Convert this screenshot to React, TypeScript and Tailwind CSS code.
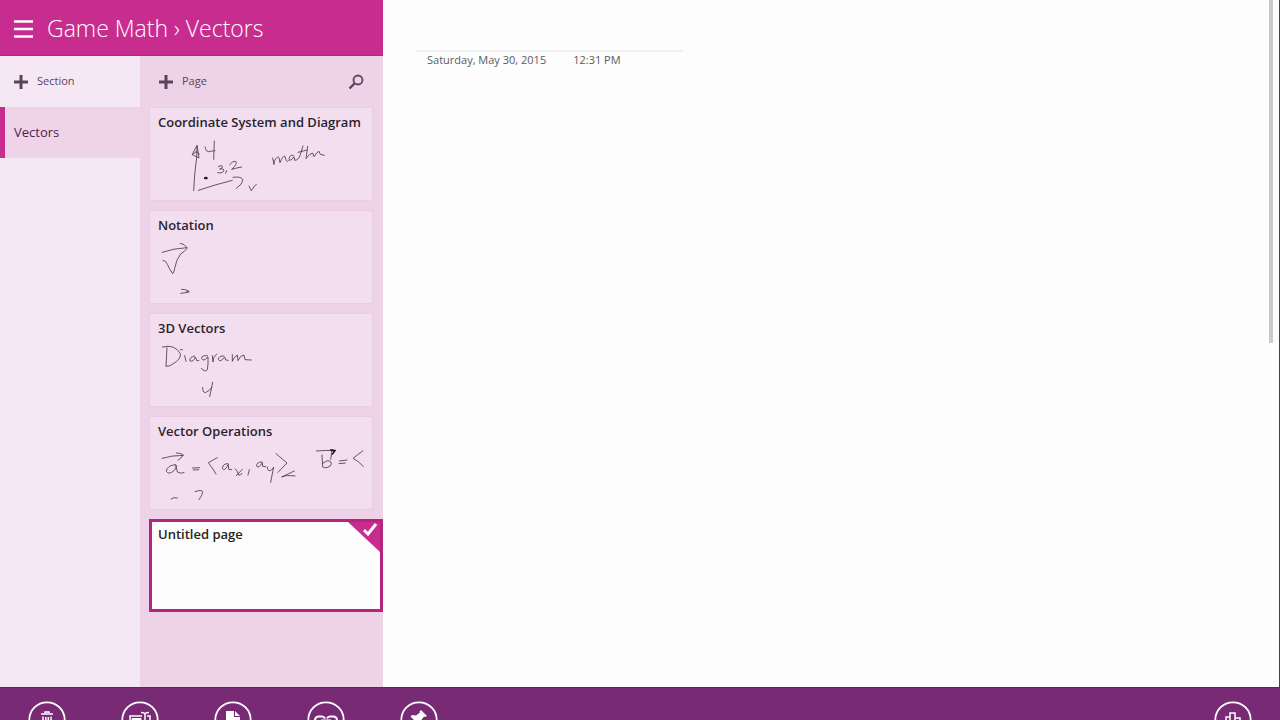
import type { ReactNode } from 'react';

type Page = {
  title: string;
  viewBox?: string;
  strokes?: string[];
  bold?: string;
};

// Ink thumbnails are recorded at three times the card size.
const pages: Page[] = [
  {
    title: 'Coordinate System and Diagram',
    viewBox: '15 114 666 186',
    strokes: [
      'M146 272 L149 225 L155 172 L156 138',
      'M142 163 L156 136 L162 174 L142 164 L153 155 L163 162',
      'M180 141 Q182 155 190 155 Q200 153 210 152 M208 123 L206 178',
      'M220 200 Q233 193 232 201 Q229 207 224 207 Q240 205 236 214 Q229 222 218 218 M245 212 L242 220',
      'M254 194 Q264 181 272 184 Q279 191 260 208 Q273 204 290 201',
      'M160 271 Q210 254 262 241 M264 232 Q289 228 294 240 Q292 253 274 265',
      'M312 258 L319 272 Q326 260 334 253',
      'M383 174 L387 194 L388 183 Q398 166 402 173 L405 188 Q413 168 419 168 L424 182 Q427 188 431 181',
      'M445 166 Q435 163 432 176 Q435 188 447 170 L449 181 Q462 180 466 164 L474 138 M459 157 L486 150 M488 139 L483 176 Q493 160 503 159 L507 170 Q516 155 522 154 L526 163 L538 166',
    ],
    bold: 'M177 234 L184 231 L188 235 L180 237 Z',
  },
  {
    title: 'Notation',
    viewBox: '15 108 666 186',
    strokes: [
      'M51 142 Q86 130 125 128 M106 115 Q119 116 127 129 Q120 139 107 147',
      'M54 166 Q63 166 67 178 Q75 195 83 206 Q87 204 89 190 Q94 163 106 148',
      'M110 253 Q124 253 132 259 Q122 265 107 265 M124 261 L132 261',
    ],
  },
  {
    title: '3D Vectors',
    viewBox: '15 108 666 186',
    strokes: [
      'M66 119 L63 175 M52 117 Q89 107 106 137 Q109 154 83 168 Q68 178 64 174',
      'M119 143 L123 160 M106 125 L112 125',
      'M149 144 Q132 148 135 159 Q145 163 151 147 L156 159 L162 157',
      'M188 144 Q170 140 170 151 Q174 163 189 147 Q190 169 187 185 Q180 194 169 181',
      'M202 143 L204 162 Q203 147 215 138',
      'M237 144 Q221 142 220 155 Q226 164 239 147 L242 156 L250 157',
      'M262 140 L262 160 Q267 146 277 141 L279 158 Q286 141 297 141 L300 155 L319 156',
      'M173 238 Q172 253 181 254 Q192 250 201 238 M203 223 L194 266',
    ],
  },
  {
    title: 'Vector Operations',
    viewBox: '15 111 666 186',
    strokes: [
      'M51 145 Q80 136 114 136 M94 129 Q107 128 115 135 Q109 145 99 151',
      'M91 164 Q66 166 64 184 Q72 196 88 181 Q97 168 92 164 L97 186 Q105 192 117 188',
      'M142 174 L164 173 M145 180 L161 179',
      'M217 143 L190 158 Q202 173 213 192',
      'M249 161 Q234 160 232 175 Q238 187 250 163 L251 178 L260 179',
      'M270 176 Q276 178 281 195 Q285 199 291 190 M292 178 L274 197 M313 179 L309 195',
      'M351 156 Q334 155 335 169 Q342 176 352 158 L353 169 L362 170',
      'M367 171 Q367 183 376 182 Q385 178 386 171 Q382 191 377 217',
      'M393 131 L426 159 L399 187 M448 183 L410 201 Q424 194 450 198',
      'M514 123 Q543 120 569 122 M557 148 L561 119',
      'M531 135 L533 171 Q541 177 556 168 Q565 153 547 152 L533 160',
      'M583 153 L606 150 M582 161 L601 159 M654 122 L624 145 Q640 153 655 169',
      'M78 267 Q86 260 97 264 M150 245 Q173 237 173 247 Q171 257 162 269',
    ],
    bold: 'M556 119 L572 121 L562 134 L566 124 Z',
  },
  { title: 'Untitled page' },
];

const actions: { label: string; icon: ReactNode }[] = [
  {
    label: 'Delete page',
    icon: (
      <g fill="none" stroke="white" strokeWidth="1.500">
        <path d="M13 13h12M17 12v-1h4v1M15 15.500v14h8v-14M17.800 16v11M20.300 16v11" />
      </g>
    ),
  },
  {
    label: 'Rename page',
    icon: (
      <g fill="none" stroke="white">
        <path d="M21 15H9v8h12M26 15h3v8h-3" strokeWidth="1.500" />
        <path d="M11 17.500h9v4h-9z" fill="white" />
        <path d="M20 11.500q4 0 4 2v12M28 11.500q-4 0-4 2" strokeWidth="1.500" />
      </g>
    ),
  },
  {
    label: 'New page',
    icon: <path d="M12 10h8v6h6v12H12zM21 10l5 5h-5z" fill="white" />,
  },
  {
    label: 'Copy link',
    icon: (
      <g fill="none" stroke="white" strokeWidth="2">
        <path d="M18 17.500q-1-2-3-2h-3q-4 0-4 4t4 4h3q2 0 3-2M20 17.500q1-2 3-2h3q4 0 4 4t-4 4h-3q-2 0-3-2M14 19.500h10" />
      </g>
    ),
  },
  {
    label: 'Pin to start',
    icon: (
      <path
        d="M21 9l6 6-2 1-1-.5-3 4 .5 4-2 1-4-4-5 4 4-5-4-4 1.500-1.500 4 .5 4-3-.5-1z"
        fill="white"
      />
    ),
  },
];

function PlusIcon() {
  return (
    <svg className="h-[14px] w-[14px]" viewBox="0 0 14 14" aria-hidden>
      <path d="M7 0v14M0 7h14" stroke="#5a4459" strokeWidth="3" />
    </svg>
  );
}

function RoundButton({ label, children }: { label: string; children: ReactNode }) {
  return (
    <button type="button" aria-label={label} className="h-[38px] w-[38px] shrink-0">
      <svg className="h-full w-full" viewBox="0 0 38 38" aria-hidden>
        <circle cx="19" cy="19" r="17.700" fill="none" stroke="white" strokeWidth="1.800" />
        {children}
      </svg>
    </button>
  );
}

function PageCard({ page }: { page: Page }) {
  return (
    <button
      type="button"
      className="mr-[10px] block border border-[#e8cde3] bg-[#f2deee] text-left"
    >
      <span className="block h-[30px] pl-2 text-[13px] leading-7 font-semibold whitespace-nowrap text-[#2c1f2d]">
        {page.title}
      </span>
      <svg className="h-[62px] w-full" viewBox={page.viewBox} preserveAspectRatio="xMinYMin meet" aria-hidden>
        <path
          d={page.strokes?.join(' ')}
          fill="none"
          stroke="#4c354c"
          strokeWidth="2.500"
          strokeLinecap="round"
          strokeLinejoin="round"
        />
        {page.bold && <path d={page.bold} fill="#1c101c" stroke="#1c101c" strokeWidth="3" />}
      </svg>
    </button>
  );
}

function SelectedCard({ page }: { page: Page }) {
  return (
    <button
      type="button"
      aria-pressed="true"
      className="flex h-[93px] items-start justify-between border-3 border-[#b5247f] bg-[#fdfdfd] text-left"
    >
      <span className="pl-[6px] text-[13px] leading-6 font-semibold text-[#242424]">{page.title}</span>
      <svg className="h-[30px] w-[32px]" viewBox="0 0 32 30" aria-hidden>
        <path d="M0 0h32v30z" fill="#c92c8f" />
        <path d="M16 8l4 4 8-10" fill="none" stroke="white" strokeWidth="3" />
      </svg>
    </button>
  );
}

export default function App() {
  return (
    <div className="flex h-screen flex-col overflow-hidden bg-[#fdfdfd] font-['Open_Sans','Noto_Sans',sans-serif]">
      <div className="flex min-h-0 flex-1">
        <aside className="flex w-[383px] shrink-0 flex-col">
          <header className="flex h-14 shrink-0 items-center gap-[14px] border-b border-[#b92380] bg-[#c92c8f] pt-[2px] pl-[14px] text-white">
            <button type="button" aria-label="Menu">
              <svg className="h-[18px] w-[19px]" viewBox="0 0 19 18" aria-hidden>
                <path d="M0 1.500h19M0 9h19M0 16.500h19" stroke="white" strokeWidth="2.600" />
              </svg>
            </button>
            <h1 className="text-[23px] font-light whitespace-nowrap">
              Game Math › Vectors
            </h1>
          </header>

          <div className="flex min-h-0 flex-1">
            <nav className="w-[140px] shrink-0 bg-[#f5e8f4]">
              <button
                type="button"
                className="flex h-[51px] w-full items-center gap-[9px] pl-[14px] text-[11px] text-[#5a4459]"
              >
                <PlusIcon />
                Section
              </button>
              <a
                href="#vectors"
                className="flex h-[51px] items-center border-l-5 border-[#c92c8f] bg-[#efd3e8] pl-[9px] text-[13px] text-[#4e1f4d]"
              >
                Vectors
              </a>
            </nav>

            <section className="flex min-w-0 flex-1 flex-col bg-[#eed3e8]">
              <div className="flex h-[51px] shrink-0 items-center justify-between pr-[19px] pl-[19px]">
                <button type="button" className="flex items-center gap-[9px] text-[11px] text-[#5a4459]">
                  <PlusIcon />
                  Page
                </button>
                <button type="button" aria-label="Search pages">
                  <svg className="h-[16px] w-[16px]" viewBox="0 0 16 16" aria-hidden>
                    <circle cx="10" cy="6" r="4.500" fill="none" stroke="#5a4459" strokeWidth="1.800" />
                    <path d="M6.500 9.500L1.500 14.500" stroke="#5a4459" strokeWidth="2.400" />
                  </svg>
                </button>
              </div>
              <div className="flex flex-col gap-[9px] pl-[9px]">
                {pages.map((page) =>
                  page.strokes ? (
                    <PageCard key={page.title} page={page} />
                  ) : (
                    <SelectedCard key={page.title} page={page} />
                  )
                )}
              </div>
            </section>
          </div>
        </aside>

        <main className="min-w-0 flex-1 pl-[33px]">
          <input
            type="text"
            aria-label="Page title"
            className="block h-[52px] w-[267px] border-b-2 border-[#f0f0f0] text-xl outline-none"
          />
          <div className="flex gap-[27px] pl-[11px] text-[11px] leading-4 text-[#5c5c5c]">
            <span>Saturday, May 30, 2015</span>
            <span>12:31 PM</span>
          </div>
        </main>
        <div className="mr-[6px] h-[343px] w-1 shrink-0 bg-[#cbcbcb]" />
        <div className="w-px shrink-0 bg-[#444444]" />
      </div>

      <footer className="flex h-[33px] shrink-0 items-start justify-between border-t border-[#66205f] bg-[#782b74] pt-[13px] pr-[28px] pl-[28px]">
        <div className="flex gap-[55px]">
          {actions.map((action) => (
            <RoundButton key={action.label} label={action.label}>
              {action.icon}
            </RoundButton>
          ))}
        </div>
        <RoundButton label="Tools">
          <path
            d="M16 22V16h-4v14M16 17V12h5v5h5v13M21 17v4"
            fill="none"
            stroke="white"
            strokeWidth="1.500"
          />
        </RoundButton>
      </footer>
    </div>
  );
}
